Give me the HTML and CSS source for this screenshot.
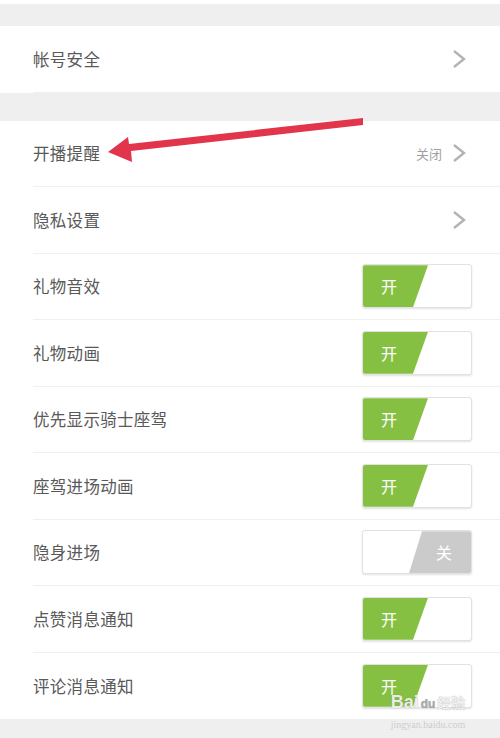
FILE: index.html
```html
<!DOCTYPE html>
<html lang="zh-CN">

<head>
    <meta charset="UTF-8">
    <meta name="viewport" content="width=device-width, initial-scale=1.0">
    <title>设置</title>
    <link rel="stylesheet" href="styles.css">
</head>

<body>
    <div class="page">
        <div class="gap gap-top"></div>

        <div class="group">
            <div class="row">
                <span class="label">帐号安全</span>
                <svg class="chevron" viewBox="0 0 14 20"><path d="M2 2 L12 10 L2 18" /></svg>
            </div>
        </div>

        <div class="gap gap-mid"></div>

        <div class="group">
            <div class="row">
                <span class="label">开播提醒</span>
                <span class="value">关闭</span>
                <svg class="chevron" viewBox="0 0 14 20"><path d="M2 2 L12 10 L2 18" /></svg>
            </div>
            <div class="row">
                <span class="label">隐私设置</span>
                <svg class="chevron" viewBox="0 0 14 20"><path d="M2 2 L12 10 L2 18" /></svg>
            </div>
            <div class="row">
                <span class="label">礼物音效</span>
                <div class="toggle on"><span>开</span></div>
            </div>
            <div class="row">
                <span class="label">礼物动画</span>
                <div class="toggle on"><span>开</span></div>
            </div>
            <div class="row">
                <span class="label">优先显示骑士座驾</span>
                <div class="toggle on"><span>开</span></div>
            </div>
            <div class="row">
                <span class="label">座驾进场动画</span>
                <div class="toggle on"><span>开</span></div>
            </div>
            <div class="row">
                <span class="label">隐身进场</span>
                <div class="toggle off"><span>关</span></div>
            </div>
            <div class="row">
                <span class="label">点赞消息通知</span>
                <div class="toggle on"><span>开</span></div>
            </div>
            <div class="row last">
                <span class="label">评论消息通知</span>
                <div class="toggle on"><span>开</span></div>
            </div>
        </div>

        <div class="gap gap-bottom"></div>

        <!-- annotation arrow drawn over the list -->
        <svg class="arrow" width="500" height="738" viewBox="0 0 500 738">
            <path d="M363 118 L363 125 L131 151 L132 162 L108 152 L128 137 L129 144 Z" />
        </svg>

        <div class="watermark">
            <div class="wm-logo">Bai<span class="wm-paw">du</span><span class="wm-cn">经验</span></div>
            <div class="wm-url">jingyan.baidu.com</div>
        </div>
    </div>
</body>

</html>
```

FILE: styles.css
```css
* {
    margin: 0;
    padding: 0;
    box-sizing: border-box;
}

body {
    background: #fff;
    font-family: "Noto Sans CJK SC", "Noto Sans", sans-serif;
}

.page {
    position: relative;
    width: 500px;
    height: 738px;
    overflow: hidden;
    background: #fff;
}

.gap {
    background: #efefef;
}

.gap-top {
    height: 22px;
    margin-top: 4px;
}

.gap-mid {
    height: 28px;
}

.gap-bottom {
    height: 19px;
}

.group {
    background: #fff;
}

.row {
    display: flex;
    align-items: center;
    height: 66.5px;
    margin-left: 33px;
    padding-right: 28px;
    border-bottom: 1px solid #f0f0f0;
}

.row.last {
    border-bottom: none;
}

.label {
    flex: 1;
    font-size: 16.5px;
    color: #595959;
    letter-spacing: 0.3px;
}

.value {
    font-size: 13px;
    color: #a0a0a0;
    margin-right: 10px;
}

.chevron {
    width: 14px;
    height: 20px;
    margin-right: 6px;
}

.chevron path {
    fill: none;
    stroke: #b3b3b3;
    stroke-width: 2.4;
}

/* switches */
.toggle {
    position: relative;
    width: 110px;
    height: 44px;
    border: 1px solid #e2e2e2;
    border-radius: 3px;
    background: #fff;
    box-shadow: 0 1px 2px rgba(0, 0, 0, 0.12);
    overflow: hidden;
}

.toggle::before {
    content: "";
    position: absolute;
    top: 0;
    bottom: 0;
    left: 0;
    right: 0;
}

.toggle.on::before {
    background: #86c043;
    clip-path: polygon(0 0, 65px 0, 50px 100%, 0 100%);
}

.toggle.off::before {
    background: #cbcbcb;
    clip-path: polygon(59px 0, 100% 0, 100% 100%, 46px 100%);
}

.toggle span {
    position: absolute;
    top: 0;
    width: 30px;
    line-height: 42px;
    text-align: center;
    color: #fff;
    font-size: 16px;
}

.toggle.on span {
    left: 11px;
}

.toggle.off span {
    left: 66px;
}

.arrow {
    position: absolute;
    top: 0;
    left: 0;
}

.arrow path {
    fill: #e2344a;
}

.watermark {
    position: absolute;
    left: 382px;
    top: 692px;
    width: 92px;
    text-align: center;
    color: rgba(255, 255, 255, 0.85);
    text-shadow: 0 0 1px rgba(110, 110, 110, 0.7);
}

.wm-logo {
    font-family: "Liberation Sans", sans-serif;
    font-size: 18px;
    font-weight: bold;
    line-height: 20px;
    white-space: nowrap;
}

.wm-paw {
    font-size: 12px;
    color: rgba(170, 170, 170, 0.85);
    margin: 0 2px;
}

.wm-cn {
    font-family: "Noto Sans CJK SC", sans-serif;
    font-size: 14px;
}

.wm-url {
    font-family: "Liberation Serif", serif;
    font-size: 10px;
    line-height: 14px;
    margin-top: 4px;
    color: rgba(200, 200, 200, 0.9);
    text-shadow: none;
}
```
